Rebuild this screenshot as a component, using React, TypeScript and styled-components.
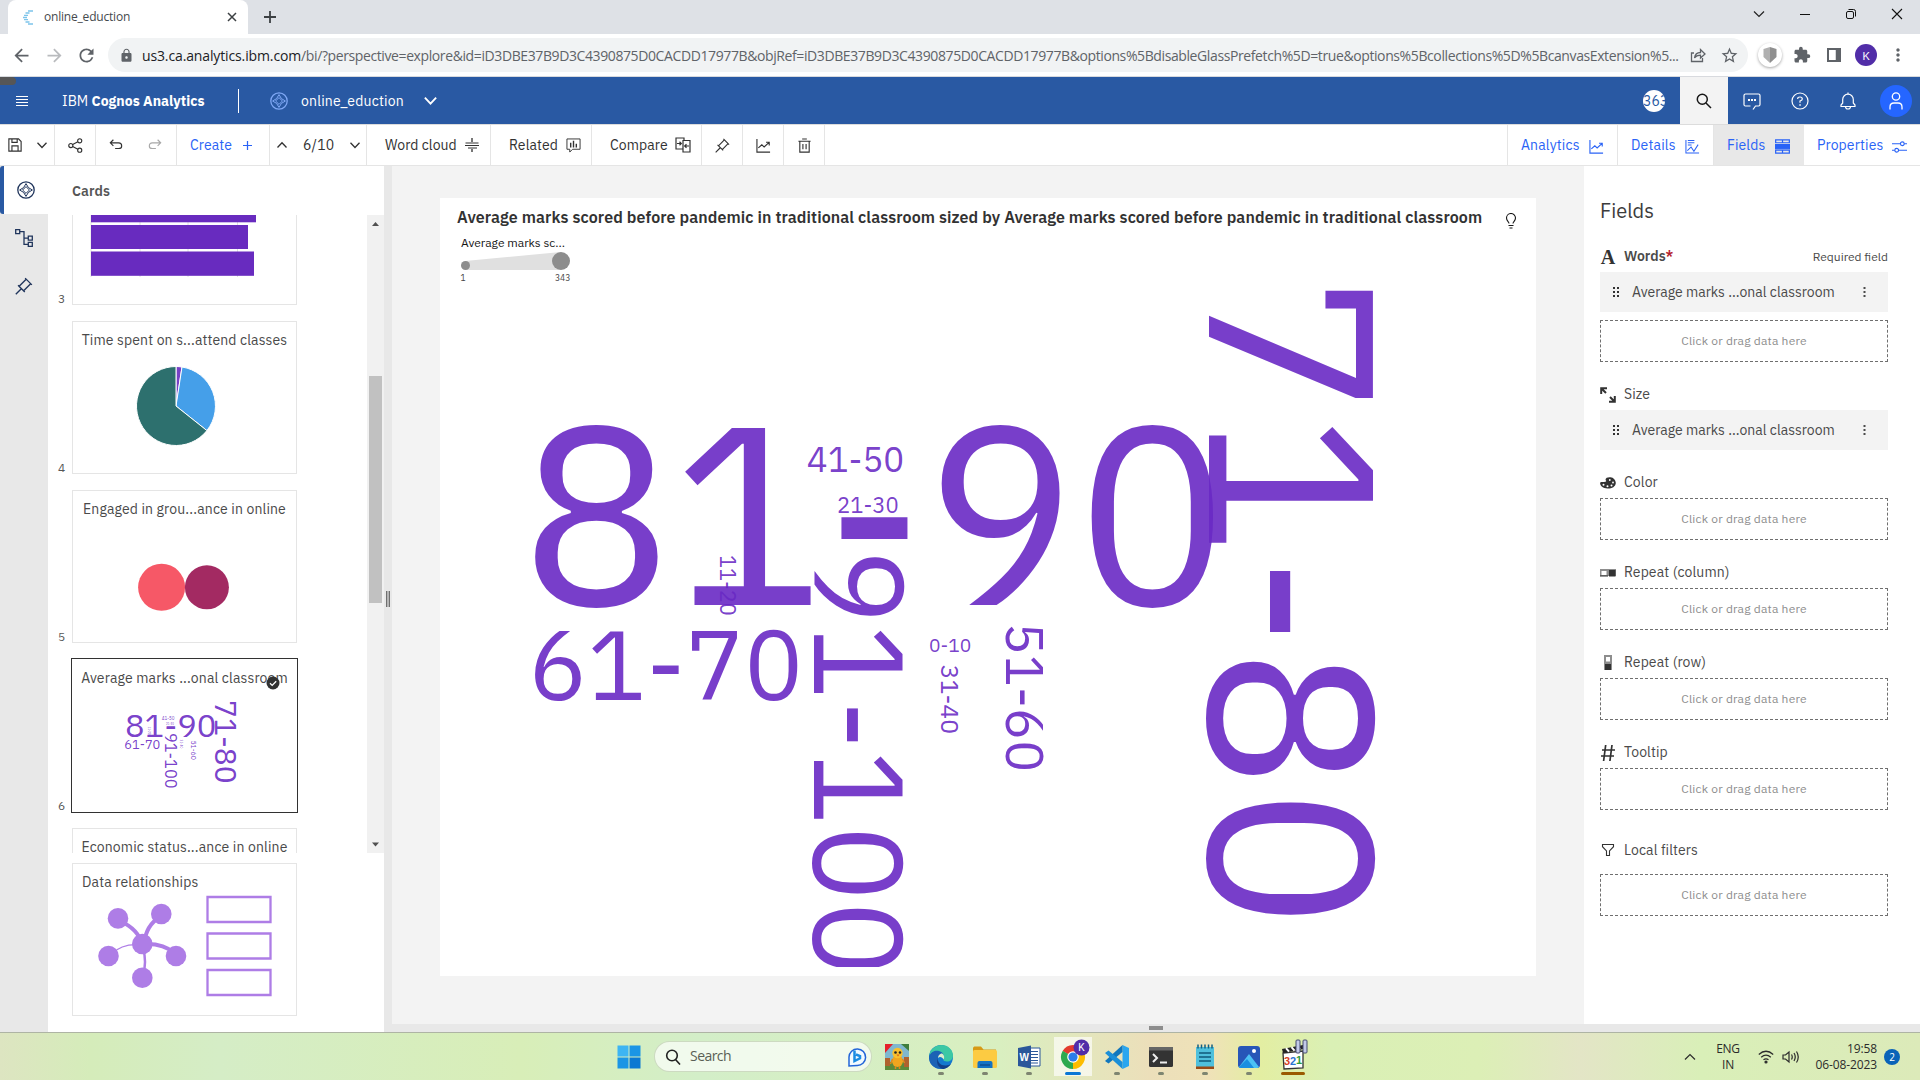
import React from "react";
import styled, { createGlobalStyle, css } from "styled-components";
import { MdArrowBack, MdArrowForward, MdRefresh, MdLock, MdStarBorder, MdExtension, MdMoreVert } from "react-icons/md";

const PLEX = `"IBM Plex Sans", Roboto, "Liberation Sans", sans-serif`;
const SEGOE = `"Segoe UI", "Open Sans", "Noto Sans", sans-serif`;
const PURPLE = "#6929c4";

const Global = createGlobalStyle`
  *, *::before, *::after { box-sizing: border-box; }
  body { margin: 0; overflow: hidden; background: #fff; font-family: ${PLEX}; color: #323232; }
  svg { display: block; flex: none; }
`;

const Screen = styled.div`
  width: 1920px;
  height: 1080px;
  display: flex;
  flex-direction: column;
  overflow: hidden;
`;

const Label = styled.span<{ $size?: number; $ls?: number; $weight?: number; $color?: string }>`
  font-size: ${(p) => p.$size ?? 14}px;
  letter-spacing: ${(p) => p.$ls ?? 0.13}px;
  font-weight: ${(p) => p.$weight ?? 400};
  color: ${(p) => p.$color ?? "inherit"};
  white-space: nowrap;
  line-height: 1.3;
`;

/* ---------- browser chrome ---------- */
const TabStrip = styled.div`
  height: 34px;
  flex: none;
  display: flex;
  align-items: stretch;
  background: #dee1e6;
  padding-left: 8px;
  font-family: ${SEGOE};
`;
const Tab = styled.div`
  width: 240px;
  background: #fff;
  border-radius: 8px 8px 0 0;
  display: flex;
  align-items: center;
  padding: 0 9px 0 15px;
  color: #45494d;
  > :nth-child(2) { margin-left: 10px; flex: 1; }
`;
const NewTab = styled.div`
  width: 44px;
  display: grid;
  place-items: center;
`;
const WindowButtons = styled.div`
  margin-left: auto;
  display: flex;
  height: 28px;
  > svg { width: 46px; height: 28px; }
`;
const AddressRow = styled.div`
  height: 43px;
  flex: none;
  display: flex;
  align-items: center;
  background: #fff;
  border-bottom: 1px solid #d8dade;
  color: #5f6368;
`;
const NavButtons = styled.div`
  display: flex;
  width: 108px;
  padding-left: 11px;
  gap: 11.5px;
`;
const UrlBar = styled.div`
  width: 1640px;
  height: 34px;
  border-radius: 17px;
  background: #f1f3f4;
  display: flex;
  align-items: center;
  padding: 0 9px 0 11px;
  font-family: ${SEGOE};
`;
const Url = styled.div`
  flex: 1;
  margin-left: 8px;
  font-size: 14px;
  letter-spacing: -0.395px;
  white-space: nowrap;
  b { font-weight: 400; color: #202124; letter-spacing: -0.13px; }
`;
const UrlIcons = styled.div`
  display: flex;
  align-items: center;
  gap: 14px;
`;
const ExtensionRow = styled.div`
  flex: 1;
  display: grid;
  grid-template-columns: repeat(5, 32px);
  justify-content: start;
  align-items: center;
  justify-items: center;
  padding-left: 6px;
`;
const Disc = styled.div<{ $d: number; $bg: string }>`
  width: ${(p) => p.$d}px;
  height: ${(p) => p.$d}px;
  flex: none;
  border-radius: 50%;
  background: ${(p) => p.$bg};
  display: flex;
  align-items: center;
  justify-content: center;
  overflow: hidden;
  color: #fff;
  font-size: 12px;
`;
const ShieldDisc = styled(Disc)`
  box-shadow: 0 1px 3px rgba(0, 0, 0, 0.35);
`;

/* ---------- application bar ---------- */
const AppBar = styled.header`
  height: 47px;
  flex: none;
  background: #2959a3;
  color: #fff;
  display: flex;
  align-items: center;
  position: relative;
`;
const Notch = styled.i`
  position: absolute;
  left: 0;
  top: 0;
  width: 16px;
  height: 8px;
  border-radius: 0 4px 4px 0;
  background: #565656;
`;
const Brand = styled.div`
  width: 238px;
  padding-left: 16px;
  display: flex;
  align-items: center;
  gap: 34px;
  > span { padding-top: 1px; }
`;
const DocName = styled.div`
  display: flex;
  align-items: center;
  border-left: 1px solid #fff;
  height: 24px;
  padding-left: 31px;
  gap: 13px;
  > span { padding-top: 1px; }
  > :nth-child(3) { margin-left: 6px; }
`;
const BarActions = styled.div`
  margin-left: auto;
  display: flex;
  height: 100%;
  align-items: center;
`;
const BarCell = styled.div<{ $on?: boolean }>`
  width: 48px;
  height: 100%;
  display: grid;
  place-items: center;
  background: ${(p) => (p.$on ? "#f3f3f3" : "transparent")};
`;
const Credit = styled(Disc)`
  margin-right: 15px;
  justify-content: flex-start;
  color: #2959a3;
  font-size: 14px;
`;

/* ---------- toolbar ---------- */
const Toolbar = styled.nav`
  height: 42px;
  flex: none;
  display: flex;
  background: #fff;
  border-top: 1px solid #dcdcdc;
  border-bottom: 1px solid #e5e5e5;
`;
const Tool = styled.div<{ $w: number; $pl?: number; $gap?: number; $center?: boolean; $color?: string }>`
  width: ${(p) => p.$w}px;
  display: flex;
  align-items: center;
  padding-left: ${(p) => p.$pl ?? 0}px;
  gap: ${(p) => p.$gap ?? 0}px;
  color: ${(p) => p.$color ?? "inherit"};
  border-right: 1px solid #e5e5e5;
  ${(p) => p.$center && css`justify-content: center;`}
`;
const PaneTabs = styled.div`
  margin-left: auto;
  display: flex;
  color: #2a63f6;
  border-left: 1px solid #e5e5e5;
`;
const PaneTab = styled.div<{ $w: number; $on?: boolean }>`
  width: ${(p) => p.$w}px;
  display: flex;
  align-items: center;
  justify-content: space-between;
  padding: 0 13px;
  background: ${(p) => (p.$on ? "#e8e8e8" : "#fff")};
  border-right: 1px solid ${(p) => (p.$on ? "#e8e8e8" : "#e5e5e5")};
  &:last-child { border-right: none; }
  > svg { margin-top: 3px; }
`;

/* ---------- work area ---------- */
const Work = styled.main`
  height: 866px;
  flex: none;
  display: flex;
`;
const Rail = styled.aside`
  width: 48px;
  background: #e8e8e8;
  color: #20355c;
`;
const RailCell = styled.div<{ $on?: boolean }>`
  height: 48px;
  display: grid;
  place-items: center;
  background: ${(p) => (p.$on ? "#fff" : "transparent")};
  border-left: ${(p) => (p.$on ? "4px solid #2959a3" : "none")};
  border-radius: ${(p) => (p.$on ? "3px 0 0 3px" : "0")};
`;
const CardsPanel = styled.section`
  width: 336px;
  background: #fff;
  display: flex;
  flex-direction: column;
`;
const CardsHead = styled.div`
  height: 49px;
  padding: 14px 0 0 24px;
  color: #565656;
`;
const ScrollArea = styled.div`
  height: 638px;
  overflow: hidden;
  display: flex;
  justify-content: space-between;
`;
const CardList = styled.div`
  margin-top: -63px;
  display: flex;
  flex-direction: column;
  gap: 16px;
`;
const CardRow = styled.div`
  height: 153px;
  flex: none;
  display: grid;
  grid-template-columns: 24px 225px;
  align-items: stretch;
`;
const CardNo = styled.div`
  align-self: end;
  padding-left: 10px;
  font-size: 12px;
  color: #565656;
  line-height: 12px;
`;
const Card = styled.div<{ $on?: boolean }>`
  height: 153px;
  background: #fff;
  outline: ${(p) => (p.$on ? "1px solid #323232" : "none")};
  border: 1px solid ${(p) => (p.$on ? "#fff" : "#e5e5e5")};
  position: relative;
  display: flex;
  flex-direction: column;
  align-items: center;
  padding-top: 8.5px;
  color: #4a4a4a;
`;
const CardArt = styled.svg`
  position: absolute;
  left: -1px;
  top: -1px;
`;
const Track = styled.div`
  width: 17px;
  background: #f1f1f1;
  display: flex;
  flex-direction: column;
  align-items: center;
  > svg:last-child { margin-top: auto; }
`;
const Thumb = styled.div`
  width: 13px;
  height: 227px;
  margin-top: 144px;
  background: #c1c1c1;
`;
const Pinned = styled.div`
  padding: 10px 0 0 24px;
  ${Card} { width: 225px; align-items: flex-start; padding-left: 9px; }
`;
const Splitter = styled.div`
  width: 8px;
  background: #e8e8e8;
  padding: 425px 2px 0;
`;
const SplitGrip = styled.div`
  width: 4px;
  height: 16px;
  border: 1px solid #6f6f6f;
  border-width: 0 1.5px;
  background: #b5b5b5;
`;
const Right = styled.div`
  flex: 1;
  display: flex;
  flex-direction: column;
`;
const Stage = styled.div`
  flex: 1;
  display: flex;
  justify-content: space-between;
  background: #f3f3f3;
`;
const Canvas = styled.section`
  margin: 32px 0 0 48px;
  width: 1096px;
  height: 778px;
  background: #fff;
`;
const CanvasHead = styled.div`
  display: flex;
  justify-content: space-between;
  align-items: flex-start;
  padding: 9px 17px 0 17px;
  height: 34px;
  color: #323232;
  > svg { margin-top: 6px; }
`;
const BottomSplit = styled.div`
  height: 8px;
  background: #e8e8e8;
  display: flex;
  padding: 2px 0 0 757px;
  i { width: 14px; height: 4px; background: #8d8d8d; }
`;

/* ---------- fields panel ---------- */
const Fields = styled.aside`
  width: 336px;
  background: #fff;
  padding: 0 32px 0 16px;
`;
const FieldsTitle = styled.h2`
  margin: 0;
  height: 77px;
  padding-top: 31px;
  font-size: 20px;
  line-height: 28px;
  font-weight: 400;
  letter-spacing: 0;
  color: #3c3c3c;
`;
const SlotHead = styled.div<{ $h: number; $lift: number }>`
  height: ${(p) => p.$h}px;
  padding-bottom: ${(p) => p.$lift}px;
  display: flex;
  align-items: center;
  gap: 8px;
  color: #4a4a4a;
  > :nth-child(3) { margin-left: auto; }
  em { font-style: normal; color: #b3202c; }
`;
const Slot = styled.div<{ $after: number }>`
  margin-bottom: ${(p) => p.$after}px;
  display: flex;
  flex-direction: column;
  gap: 8px;
`;
const Chip = styled.div`
  height: 40px;
  background: #f3f3f3;
  display: flex;
  align-items: center;
  padding: 0 22px 0 13px;
  gap: 12px;
  color: #4a4a4a;
  > :last-child { margin-left: auto; }
`;
const Drop = styled.div`
  height: 42px;
  border: 1px dashed #6f6f6f;
  display: grid;
  place-items: center;
  color: #8d8d8d;
`;

/* ---------- taskbar ---------- */
const Taskbar = styled.footer`
  height: 48px;
  flex: none;
  border-top: 1px solid #aeb4a4;
  background: linear-gradient(90deg, #dde5c1 0, #d5ecba 90px, #d5edc6 220px, #d8eeb8 520px, #d3eec8 700px, #d9efc0 1000px, #ecdfba 1150px, #efe2b8 1210px, #e3eea2 1260px, #daf0b5 1330px, #dcefb6 1480px, #e3e5c6 1580px, #d9efb8 1700px, #dceab9 1920px);
  display: flex;
  align-items: center;
  font-family: ${SEGOE};
  color: #2b2b2b;
`;
const Apps = styled.div`
  margin-left: 610px;
  display: flex;
  align-items: center;
  height: 100%;
`;
const TaskApp = styled.div<{ $mark?: "dot" | "blue" | "orange"; $on?: boolean; $w?: number }>`
  width: ${(p) => p.$w ?? 44}px;
  height: 47px;
  display: flex;
  flex-direction: column;
  align-items: center;
  padding-top: 11px;
  > svg { width: 26px; height: 26px; }
  ${(p) =>
    p.$on &&
    css`
      background: linear-gradient(rgba(255, 255, 255, 0.65), rgba(255, 255, 255, 0.65)) center 4px / 38px 39px no-repeat;
    `}
  &::after {
    content: "";
    margin-top: 2px;
    height: 3px;
    border-radius: 2px;
    width: ${(p) => (p.$mark === "blue" ? 16 : p.$mark === "orange" ? 24 : p.$mark ? 6 : 0)}px;
    background: ${(p) => (p.$mark === "blue" ? "#0a77d5" : p.$mark === "orange" ? "#9a5a00" : "#7e8571")};
  }
`;
const SearchPill = styled.div`
  width: 218px;
  height: 31px;
  margin: 0 3px 0 7px;
  border-radius: 16px;
  background: rgba(255, 255, 255, 0.68);
  border: 1px solid rgba(160, 180, 140, 0.45);
  display: flex;
  align-items: center;
  padding: 0 3px 0 10px;
  gap: 9px;
  color: #5a5f55;
  > :last-child { margin-left: auto; }
`;
const Tray = styled.div`
  margin-left: auto;
  width: 240px;
  display: flex;
  align-items: center;
  font-size: 12px;
  line-height: 16px;
  white-space: nowrap;
`;
const Lang = styled.div`
  width: 30px;
  text-align: center;
  margin: 0 15px 0 13px;
  letter-spacing: -0.3px;
`;
const Clock = styled.div`
  margin-left: auto;
  text-align: right;
  letter-spacing: -0.1px;
  margin-right: 7px;
`;
const Badge = styled(Disc)`
  margin-right: 20px;
  font-size: 10px;
`;

/* ---------- icons ---------- */
const I: React.FC<{ s?: number; vb?: string; sw?: number; color?: string; children: React.ReactNode }> = ({ s = 16, vb = "0 0 16 16", sw = 1, color = "currentColor", children }) => (
  <svg width={s} height={s} viewBox={vb} fill="none" stroke={color} strokeWidth={sw}>{children}</svg>
);
const Chevron: React.FC<{ up?: boolean; s?: number; sw?: number }> = ({ up, s = 12, sw = 1.3 }) => (
  <I s={s} vb="0 0 12 12" sw={sw}><path d={up ? "M1.5 8.5L6 3.7l4.5 4.8" : "M1.5 3.7L6 8.5l4.5-4.8"} /></I>
);
const Explore: React.FC<{ s?: number; color?: string }> = ({ s = 18, color }) => (
  <I s={s} vb="0 0 18 18" sw={1.3} color={color}>
    <circle cx="9" cy="9" r="8.2" />
    <path d="M9 2.6Q10.6 7.4 15.4 9Q10.6 10.6 9 15.4Q7.4 10.6 2.6 9Q7.4 7.4 9 2.6zM9 5.6L12.4 9 9 12.4 5.6 9z" strokeWidth="1" />
  </I>
);
const Pin: React.FC<{ s?: number }> = ({ s = 16 }) => (
  <I s={s} sw={1.2}><path d="M.7 15.3L5.6 10.4M2.7 7.3l6 6M3.7 8.3L9.7 2.3M7.7 12.3l6-6M9 1l6 6" /></I>
);
const Trend: React.FC<{ s?: number }> = ({ s = 16 }) => (
  <I s={s} sw={1.2}><path d="M1 1v14h14M2.5 10.5l3.7-3.2 2.5 2.2L14 4.6M10.7 4.5h3.4v3.4" /></I>
);
const Kebab = () => (
  <svg width="3" height="12" viewBox="0 0 3 12" fill="#4a4a4a"><path d="M.5 1h2v2h-2zM.5 5h2v2h-2zM.5 9h2v2h-2z" /></svg>
);
const Grip = () => (
  <svg width="7" height="12" viewBox="0 0 7 12" fill="#323232"><path d="M0 1h2v2H0zM4 1h2v2H4zM0 5h2v2H0zM4 5h2v2H4zM0 9h2v2H0zM4 9h2v2H4z" /></svg>
);

/* ---------- word cloud ---------- */
type WordT = { text: string; x: number; y: number; cap: number; down?: boolean };

const Word: React.FC<WordT> = ({ text, x, y, cap, down }) => (
  <text transform={`translate(${x} ${y})${down ? " rotate(90)" : ""}`} fontSize={cap / 0.698} fill={PURPLE} fillOpacity={0.9} fontFamily={PLEX}>{text}</text>
);

const words: WordT[] = [
  { text: "81-90", x: 520.5, y: 604.8, cap: 176.5 },
  { text: "71-80", x: 1208.8, y: 274.7, cap: 163.1, down: true },
  { text: "91-100", x: 813.6, y: 548.7, cap: 87.9, down: true },
  { text: "61-70", x: 528.4, y: 700.3, cap: 68.5 },
  { text: "51-60", x: 1006.4, y: 622.7, cap: 37.3, down: true },
  { text: "41-50", x: 806.8, y: 472.2, cap: 24.3 },
  { text: "31-40", x: 941, y: 664.5, cap: 17.4, down: true },
  { text: "21-30", x: 837, y: 512.9, cap: 15.4 },
  { text: "11-20", x: 719.8, y: 555, cap: 15.2, down: true },
  { text: "0-10", x: 929, y: 651.7, cap: 13.4 },
];
const thumbWords: WordT[] = [
  { text: "81-90", x: 125, y: 736.7, cap: 22.8 },
  { text: "71-80", x: 215, y: 700, cap: 20.9, down: true },
  { text: "91-100", x: 165, y: 733, cap: 11.4, down: true },
  { text: "61-70", x: 124.3, y: 748.7, cap: 9 },
  { text: "51-60", x: 190.6, y: 740.4, cap: 4.9, down: true },
  { text: "41-50", x: 161.8, y: 720, cap: 3.2 },
  { text: "31-40", x: 179.5, y: 739.5, cap: 2.2, down: true },
  { text: "21-30", x: 166, y: 725, cap: 2 },
  { text: "11-20", x: 148, y: 726.5, cap: 2, down: true },
];

/* ---------- thumbnails ---------- */
const BarsArt = () => (
  <CardArt width="225" height="153" viewBox="72 152 225 153">
    <path d="M140 200v77M188 200v77M237.500 200v77M91 200v77" stroke="#e0e0e0" />
    <g fill="#682bbf"><rect x="91" y="198" width="165" height="24.300" /><rect x="91" y="225" width="157" height="24" /><rect x="91" y="251.500" width="163" height="24.300" /></g>
  </CardArt>
);
const PieArt = () => (
  <CardArt width="225" height="153" viewBox="72 321 225 153">
    <g stroke="#fff" strokeWidth="1">
      <path d="M176 406V366.500A39.500 39.500 0 0 1 182 367z" fill="#7741c6" />
      <path d="M176 406L182 367A39.500 39.500 0 0 1 206.900 430.600z" fill="#459fe9" />
      <path d="M176 406L206.900 430.600A39.500 39.500 0 1 1 176 366.500z" fill="#2d706e" />
    </g>
  </CardArt>
);
const BubbleArt = () => (
  <CardArt width="225" height="153" viewBox="72 490 225 153">
    <circle cx="161.600" cy="587.300" r="23.500" fill="#f65867" /><circle cx="206.900" cy="587.300" r="22" fill="#a32a62" />
  </CardArt>
);
const CloudArt = () => (
  <CardArt width="225" height="153" viewBox="72 659 225 153">
    {thumbWords.map((w) => <Word key={w.text} {...w} />)}
    <circle cx="273" cy="683" r="6.500" fill="#323232" />
    <path d="M270 683.200l2.200 2.200 4-4.200" fill="none" stroke="#fff" strokeWidth="1.300" />
  </CardArt>
);
const RelationsArt = () => (
  <CardArt width="225" height="153" viewBox="72 863 225 153">
    <g fill="none" stroke="#ae7de6">
      <path d="M142 944Q138 929 120 921" strokeWidth="4" /><path d="M144 944Q146 925 160 917" strokeWidth="4" />
      <path d="M143 944Q164 943 174 953" strokeWidth="4" /><path d="M142 945Q122 943 112 954" strokeWidth="1.200" />
      <path d="M143 948Q147 962 143 975" strokeWidth="2.500" />
      <path d="M207.500 897h63v25h-63zM207.500 933.500h63v25h-63zM207.500 970h63v25h-63z" strokeWidth="2.300" />
    </g>
    <g fill="#ae7de6">
      {[[142.300, 944], [118, 918.400], [161.300, 914], [108.500, 956], [176, 956], [142.300, 977.700]].map(([x, y]) => <circle key={`${x}-${y}`} cx={x} cy={y} r="10.300" />)}
    </g>
  </CardArt>
);

const cards = [
  { no: 3, title: "", art: <BarsArt /> },
  { no: 4, title: "Time spent on s...attend classes", art: <PieArt /> },
  { no: 5, title: "Engaged in grou...ance in online", art: <BubbleArt /> },
  { no: 6, title: "Average marks ...onal classroom", art: <CloudArt />, on: true },
  { no: 7, title: "Economic status...ance in online", art: null },
];

const slots = [
  { icon: "words", name: "Words", req: true, chip: true, drop: true, h: 29, after: 17 },
  { icon: "size", name: "Size", chip: true, h: 31, after: 17 },
  { icon: "color", name: "Color", drop: true, h: 31, after: 17 },
  { icon: "col", name: "Repeat (column)", drop: true, h: 31, after: 17 },
  { icon: "row", name: "Repeat (row)", drop: true, h: 31, after: 17 },
  { icon: "tip", name: "Tooltip", drop: true, h: 31, after: 16 },
  { icon: "filter", name: "Local filters", drop: true, h: 48, after: 0 },
];
const slotIcons: Record<string, React.ReactNode> = {
  words: <svg width="16" height="16" viewBox="0 0 16 16"><text x="8" y="15" textAnchor="middle" fontFamily={`"Liberation Serif", serif`} fontWeight="700" fontSize="20" fill="#323232">A</text></svg>,
  size: <I sw={2} color="#323232"><path d="M1.200 7V1.200H7M1.500 1.500l4.500 4.500M14.800 9v5.800H9M14.500 14.500L10 10" /></I>,
  color: (
    <svg width="16" height="16" viewBox="0 0 16 16"><path d="M5.500 5C5.500 2.500 8 2 10.500 2.200 13.500 2.500 15.800 5 15.800 8 15.500 11.800 12 13.600 7.500 13.500 3 13.300 0 11 .1 8 .2 6.600 2 6.900 4 7 6 7 7 6 5.500 5z" fill="#323232" /><g fill="#fff"><circle cx="9.800" cy="5" r=".9" /><circle cx="13" cy="7.500" r=".9" /><circle cx="11.500" cy="10.500" r="1" /><circle cx="7.500" cy="11.300" r="1" /><circle cx="3.500" cy="9.800" r="1" /></g></svg>
  ),
  col: <svg width="16" height="16" viewBox="0 0 16 16"><path d="M0 4h16v7H0z" fill="#8d8d8d" /><path d="M0 10.500h8v1H0zM9 5h6.500v6.500H9z" fill="#323232" /><path d="M1.500 6h5v4h-5z" fill="#fff" /></svg>,
  row: <svg width="16" height="16" viewBox="0 0 16 16"><path d="M4 0h8v15H4z" fill="#8d8d8d" /><path d="M5 9h6v6H5z" fill="#323232" /><path d="M6 2h4v4.500H6z" fill="#fff" /></svg>,
  tip: <I sw={1.7} color="#323232"><path d="M5.700 0L3.600 16M12 0L9.900 16M2 5h13M1 11h13" /></I>,
  filter: <I sw={1.100} color="#323232"><path d="M2.500 2.500h11v2.200l-4 4.300v4.500h-3V9l-4-4.300z" /></I>,
};

/* ---------- taskbar icons ---------- */
const StartIcon = () => (
  <svg viewBox="0 0 26 26"><path d="M1.500 1.500h11v11h-11z" fill="#3db5f3" /><path d="M13.500 1.500h11v11h-11zM1.500 13.500h11v11h-11z" fill="#1b95e5" /><path d="M13.500 13.500h11v11h-11z" fill="#0b78d2" /></svg>
);
const BingIcon = () => (
  <svg width="22" height="22" viewBox="0 0 22 22"><path d="M3 20V11a8.300 8.300 0 1 1 8 8.500z" fill="#f2faff" stroke="#2365d8" strokeWidth="1.500" /><path d="M8.500 4.500v10.500l5.500-2.700v-2.300l-4-1.500" fill="none" stroke="#1a8be2" strokeWidth="2.500" /></svg>
);
const ChickIcon = () => (
  <svg viewBox="0 0 26 26"><path d="M1 0h24v26H1z" fill="#7fb7cf" /><path d="M1 18h24v8H1z" fill="#5d8a3a" /><path d="M1 14h5v8H1zM20 13h5v10h-5z" fill="#b0622f" /><path d="M17 0h8v7z" fill="#3f7e3c" /><ellipse cx="13.500" cy="17" rx="5.500" ry="6" fill="#f0a51f" /><path d="M8.500 15l-2 5M18.500 15l2 4M11.500 22v3M15.500 22v3" stroke="#e08a1a" strokeWidth="1.500" /><circle cx="13.500" cy="9" r="5.200" fill="#f8c02e" /><circle cx="11.500" cy="8.500" r="1.300" fill="#222" /><circle cx="16" cy="8.500" r="1.300" fill="#222" /><path d="M12.500 10.500h3l-1.500 2z" fill="#d8641a" /><path d="M1 0h8L1 9z" fill="#e6202a" /></svg>
);
const EdgeIcon = () => (
  <svg viewBox="0 0 26 26"><circle cx="13" cy="13" r="12" fill="#1479cf" /><path d="M1.200 12C2 5 7.500 1 13.500 1 20 1 25 6 25 11.500c0 4-3 6-6 6-2.500 0-4-1-3.500-2 1.500-3.500-1-6.500-5-6.500-4.500 0-8 1-9.300 3z" fill="#3cc8a4" /><path d="M1.200 12C3 7 8 6 11 7c5 1.500 6 6 4.500 8.500-1-2-3-3-5-2-3 2-1.500 8.500 4 11C7 26 0 20 1.200 12z" fill="#1b62b5" /><path d="M10 14c-1 4 3 8 8 7.500 2 0 4-1 5.200-2C21.500 22.500 18 25 14.500 25 9 23 8 17 10 14z" fill="#123f8a" /><path d="M15.500 15.500c1.500-2 .5-5-1.500-6-2.500 0-4 2.500-4 4.500 1.500-2 4.500-1 5.500 1.500z" fill="#daeecb" /></svg>
);
const FolderIcon = () => (
  <svg viewBox="0 0 26 26"><path d="M1 4.500C1 3 2 2.500 3 2.500h6l2.500 3H24v6H1z" fill="#d79a16" /><rect x="1" y="6" width="24" height="18" rx="1.500" fill="#fccb42" /><path d="M5.500 24v-5q0-2 2-2h11q2 0 2 2v5z" fill="#1473c4" /><path d="M8 21h10" stroke="#0d4e93" strokeWidth="1.500" /></svg>
);
const WordIcon = () => (
  <svg viewBox="0 0 26 26"><path d="M13 4h11v18H13z" fill="#fff" stroke="#2b579a" /><path d="M15 7.500h7M15 10.500h7M15 13.500h7M15 16.500h7M15 19h7" stroke="#2b579a" strokeWidth="1.200" /><path d="M2 4l13-2.500v23L2 22z" fill="#2b579a" /><text x="8.300" y="17" textAnchor="middle" fontSize="10" fontWeight="700" fill="#fff" fontFamily={`"Liberation Sans", sans-serif`}>W</text></svg>
);
const ChromeIcon = () => (
  <svg viewBox="0 0 26 26" overflow="visible"><path d="M13 13L2.600 7A12 12 0 0 1 23.400 7z" fill="#e33b2e" /><path d="M13 13L2.600 7A12 12 0 0 0 13 25z" fill="#2da94f" /><path d="M13 13L23.400 7A12 12 0 0 1 13 25z" fill="#fdbd00" /><path d="M13 13L2.600 7l5.200 9z" fill="#2da94f" /><circle cx="13" cy="13" r="5.800" fill="#fff" /><circle cx="13" cy="13" r="4.600" fill="#2a7de9" /><circle cx="21.500" cy="3.500" r="8" fill="#512da8" /><text x="21.500" y="7.200" textAnchor="middle" fontSize="10" fill="#fff" fontFamily="Roboto, sans-serif">K</text></svg>
);
const CodeIcon = () => (
  <svg viewBox="0 0 26 26"><path d="M18.500 1L25 4v18l-6.500 3z" fill="#2aa6ef" /><path d="M18.500 1v7L4.500 19.500 1 17z" fill="#1177bd" /><path d="M18.500 25v-7L4.500 6.500 1 9z" fill="#1b8fd8" /></svg>
);
const TermIcon = () => (
  <svg viewBox="0 0 26 26"><rect x="1" y="3" width="24" height="20" rx="1.500" fill="#333" /><path d="M1 3h24v3.500H1z" fill="#666" /><path d="M5 10l4 4-4 4M12 18.500h7" fill="none" stroke="#eee" strokeWidth="2" /></svg>
);
const NoteIcon = () => (
  <svg viewBox="0 0 26 26"><path d="M4 3h18v20H4z" fill="#4fc0dc" /><path d="M7 9h12M7 13h12M7 17h12" stroke="#11597a" strokeWidth="1.500" /><path d="M6 .5v4M9.500.5v4M13 .5v4M16.500.5v4M20 .5v4" stroke="#155f80" strokeWidth="1.500" /><path d="M4 22.500h18V25H4z" fill="#9a4a16" /></svg>
);
const PhotosIcon = () => (
  <svg viewBox="0 0 26 26"><rect x="2" y="2" width="22" height="22" rx="3" fill="#2756b8" /><path d="M3 23L13 10l10 13q-1 1-2 1H5q-1.500 0-2-1z" fill="#4cc2f5" /><path d="M3 23l8-8 7 9H5q-1.500 0-2-1z" fill="#1a8ee0" /><circle cx="18" cy="7" r="2" fill="#fff" /></svg>
);
const ClapIcon = () => (
  <svg viewBox="0 0 26 26" overflow="visible"><path d="M3 9l20-2v17L4 25z" fill="#fff" stroke="#333" strokeWidth="1.300" /><path d="M2 5l21-4 .5 4L3 9z" fill="#222" /><path d="M6 4.200l3 3.500M11.500 3.200l3 3.500M17 2.200l3 3" stroke="#fff" strokeWidth="2" /><g fontSize="11" fontWeight="700" fontFamily={`"Liberation Sans", sans-serif`}><text x="4" y="21" fill="#d8401f">3</text><text x="10" y="20.500" fill="#2d74d0">2</text><text x="16" y="20" fill="#2f9c3d">1</text></g><rect x="16" y="-4" width="4" height="13" rx="1" fill="#c3cbe8" stroke="#444b70" /><rect x="23" y="-4" width="4" height="13" rx="1" fill="#c3cbe8" stroke="#444b70" /></svg>
);

export default function App() {
  return (
    <Screen>
      <Global />
      <TabStrip>
        <Tab>
          <svg width="11" height="15" viewBox="0 0 11 15"><path d="M5 1h5M2.500 3h4M1 5.300h4M0 7.500h4M1 9.700h4M2.500 12h4M5 14h5" stroke="#7cc4ea" strokeWidth="1.300" /></svg>
          <Label $size={12} $ls={-0.2}>online_eduction</Label>
          <I s={14} vb="0 0 14 14" sw={1.500} color="#3c4043"><path d="M3 3l8 8M11 3l-8 8" /></I>
        </Tab>
        <NewTab><I s={14} vb="0 0 14 14" sw={1.800} color="#3c4043"><path d="M7 1v12M1 7h12" /></I></NewTab>
        <WindowButtons>
          <svg viewBox="0 0 46 28" fill="none" stroke="#222" strokeWidth="1.200"><path d="M18 11.500l5 5 5-5" /></svg>
          <svg viewBox="0 0 46 28" stroke="#111"><path d="M18 14.500h10" /></svg>
          <svg viewBox="0 0 46 28" fill="none" stroke="#111"><rect x="18.500" y="11.500" width="7" height="7" rx="1.500" /><path d="M20.500 9.500h5q2 0 2 2v5" /></svg>
          <svg viewBox="0 0 46 28" stroke="#111" strokeWidth="1.100"><path d="M18 9l10 10M28 9l-10 10" /></svg>
        </WindowButtons>
      </TabStrip>
      <AddressRow>
        <NavButtons>
          <MdArrowBack size={21} /><MdArrowForward size={21} color="#b9bbbe" /><MdRefresh size={21} />
        </NavButtons>
        <UrlBar>
          <MdLock size={15} />
          <Url><b>us3.ca.analytics.ibm.com</b>/bi/?perspective=explore&amp;id=iD3DBE37B9D3C4390875D0CACDD17977B&amp;objRef=iD3DBE37B9D3C4390875D0CACDD17977B&amp;options%5BdisableGlassPrefetch%5D=true&amp;options%5Bcollections%5D%5BcanvasExtension%5...</Url>
          <UrlIcons>
            <I s={16} sw={1.300}><path d="M4 6H1.500v8.500h11V11M4.500 11c.5-4 3-5.500 6-5.500V2.500L15 7l-4.500 4V8.200c-2.500 0-4.500.6-6 2.800z" /></I>
            <MdStarBorder size={19} />
          </UrlIcons>
        </UrlBar>
        <ExtensionRow>
          <ShieldDisc $d={24} $bg="#fff"><svg width="14" height="16" viewBox="0 0 14 16"><path d="M7 0l6.500 2v8L7 16z" fill="#8f8f8f" /><path d="M7 0L.5 2v8L7 16z" fill="#b0b0b0" /></svg></ShieldDisc>
          <MdExtension size={18} />
          <I s={14} vb="0 0 14 14" sw={2}><path d="M1 1h12v12H1z" /><path d="M11 1v12" strokeWidth="4.500" /></I>
          <Disc $d={22} $bg="#512da8">K</Disc>
          <MdMoreVert size={20} />
        </ExtensionRow>
      </AddressRow>

      <AppBar>
        <Notch />
        <Brand>
          <I s={12} vb="0 0 12 12" sw={1}><path d="M0 1.500h12M0 4.500h12M0 7.500h12M0 10.500h12" /></I>
          <Label $size={14} $ls={0.03}>IBM <b>Cognos Analytics</b></Label>
        </Brand>
        <DocName>
          <Explore color="#7fa8f5" />
          <Label $ls={0.18}>online_eduction</Label>
          <Chevron s={15} sw={1.500} />
        </DocName>
        <BarActions>
          <Credit $d={22} $bg="#fff">363</Credit>
          <BarCell $on><I s={16} sw={1.500} color="#161616"><circle cx="6.300" cy="6.300" r="5" /><path d="M10 10l5 5" /></I></BarCell>
          <BarCell><I s={18} vb="0 0 18 18" sw={1.200}><path d="M7.500 14H2.500Q1 14 1 12.500v-9Q1 2 2.500 2h13Q17 2 17 3.500v9Q17 14 15.500 14h-3L10 17.500" /><path d="M5 8h2M8 8h2M11 8h2" strokeWidth="2" /></I></BarCell>
          <BarCell><I s={18} vb="0 0 18 18" sw={1.200}><circle cx="9" cy="9" r="8" /><path d="M6.700 7V6.600Q6.700 5 9 5t2.300 2Q11.300 8.300 9 9v1.800" /><path d="M8.300 13h1.500" strokeWidth="1.600" /></I></BarCell>
          <BarCell><I s={18} vb="0 0 18 18" sw={1.200}><path d="M9 .5v2M2 14.500h14v-1.500l-1.700-2V7.500a5.300 5.300 0 0 0-10.600 0V11L2 13zM6.500 14.500a2.500 2.500 0 0 0 5 0" /></I></BarCell>
          <BarCell><Disc $d={32} $bg="#2566ff"><I s={18} vb="0 0 18 18" sw={1.300}><circle cx="9" cy="4.500" r="3.700" /><path d="M3 17.500V15q0-4 4-4h4q4 0 4 4v2.500" /></I></Disc></BarCell>
        </BarActions>
      </AppBar>

      <Toolbar>
        <Tool $w={55} $pl={8} $gap={14}>
          <I s={14} sw={1.300}><path d="M1 1h11l3 3v11H1zM4.500 1v4h6V1M4.500 15V9h7v6" /></I>
          <Chevron />
        </Tool>
        <Tool $w={41} $center><I s={15} sw={1.200}><circle cx="12.500" cy="3" r="2.200" /><circle cx="12.500" cy="13" r="2.200" /><circle cx="3" cy="8" r="2.200" /><path d="M5 7l5.500-3M5 9l5.500 3" /></I></Tool>
        <Tool $w={81} $pl={13} $gap={25}>
          <I s={14} sw={1.300}><path d="M5 2L1.500 5.500 5 9M1.500 5.500H11Q14.500 5.500 14.500 9v0Q14.500 12 11 12H7" /></I>
          <I s={14} sw={1.300} color="#a8a8a8"><path d="M11 2l3.500 3.500L11 9M14.500 5.500H5Q1.500 5.500 1.500 9v0Q1.500 12 5 12H9" /></I>
        </Tool>
        <Tool $w={93} $pl={13} $gap={11} $color="#2a63f6">
          <Label $ls={0.1}>Create</Label>
          <I s={9} vb="0 0 8 8" sw={1.100}><path d="M4 0v8M0 4h8" /></I>
        </Tool>
        <Tool $w={97} $pl={6} $gap={15}><Chevron up /><Label $ls={0.2}>6/10</Label><Chevron /></Tool>
        <Tool $w={124} $pl={18} $gap={7}>
          <Label $ls={0.04}>Word cloud</Label>
          <I s={16}><path d="M1.500 6h13M1 8.500h14M4 11h9" /><path d="M8 1v4M8 12v3" strokeWidth="2" stroke="#777" /></I>
        </Tool>
        <Tool $w={101} $pl={18} $gap={8}>
          <Label $ls={0.1}>Related</Label>
          <I s={15}><path d="M1 1h14v11H7l-3 3v-3H1z" /><path d="M5 5v5M8 3v7M11 6v4" strokeWidth="1.500" /></I>
        </Tool>
        <Tool $w={110} $pl={18} $gap={7}>
          <Label $ls={0.08}>Compare</Label>
          <I s={16} sw={1.200}><path d="M9 3V1H1v11h7M8 3.500h7V15H8z" /><path d="M2 6.500h4M4.500 4.800L6.300 6.500 4.500 8.200M14 9h-4M11.500 7.300L9.700 9l1.800 1.700" /></I>
        </Tool>
        <Tool $w={41} $center><Pin s={15} /></Tool>
        <Tool $w={41} $center><Trend s={15} /></Tool>
        <Tool $w={41} $center><I s={15} sw={1.200}><path d="M5.500 1h5M1.500 3.500h13M3 3.500V15h10V3.500M6.300 6.500v5.500M9.700 6.500v5.500" /></I></Tool>
        <PaneTabs>
          <PaneTab $w={110}><Label $ls={0.15}>Analytics</Label><Trend s={15} /></PaneTab>
          <PaneTab $w={96}><Label $ls={0.18}>Details</Label><I s={15} sw={1.100}><path d="M1 1v14h14M3 1.500h7M3 4h7M3 6.500h4M2.500 12.500l4-4 3 4.500L14 6" /></I></PaneTab>
          <PaneTab $w={90} $on><Label $ls={0.1}>Fields</Label><I s={15} sw={1.300}><path d="M.7 1h14.600v3H.7zM.7 12h14.600v3H.7zM8 1v3M8 12v3" /><path d="M.5 6h15v4.500H.5z" fill="#2a63f6" /></I></PaneTab>
          <PaneTab $w={116}><Label $ls={0.12}>Properties</Label><I s={15} sw={1.200}><circle cx="11" cy="5" r="2" /><circle cx="5" cy="12" r="2" /><path d="M0 5h9M13 5h3M0 12h3M7 12h9" /></I></PaneTab>
        </PaneTabs>
      </Toolbar>

      <Work>
        <Rail>
          <RailCell $on><Explore /></RailCell>
          <RailCell><I s={18} vb="0 0 18 18" sw={1.300}><path d="M.7.7h4v4h-4zM13.300 7.200h4v4h-4zM13.300 13.300h4v4h-4zM4.700 2.700H9v12.600h4.300M9 9.200h4.300" /></I></RailCell>
          <RailCell><Pin s={18} /></RailCell>
        </Rail>
        <CardsPanel>
          <CardsHead><Label $weight={600} $ls={0.1}>Cards</Label></CardsHead>
          <ScrollArea>
            <CardList>
              {cards.map((c) => (
                <CardRow key={c.no}>
                  <CardNo>{c.no}</CardNo>
                  <Card $on={c.on}>{c.art}<Label>{c.title}</Label></Card>
                </CardRow>
              ))}
            </CardList>
            <Track>
              <svg width="17" height="17" viewBox="0 0 17 17"><path d="M5 11l3.500-4 3.500 4z" fill="#505050" /></svg>
              <Thumb />
              <svg width="17" height="17" viewBox="0 0 17 17"><path d="M5 6.500l3.500 4 3.500-4z" fill="#505050" /></svg>
            </Track>
          </ScrollArea>
          <Pinned><Card><RelationsArt /><Label>Data relationships</Label></Card></Pinned>
        </CardsPanel>
        <Splitter><SplitGrip /></Splitter>
        <Right>
          <Stage>
            <Canvas>
              <CanvasHead>
                <Label $size={16} $weight={600} $ls={0.107}>Average marks scored before pandemic in traditional classroom sized by Average marks scored before pandemic in traditional classroom</Label>
                <I s={16} sw={1.100} color="#161616"><path d="M6 10.500C6 9 3.500 8 3.500 5a4.500 4.500 0 0 1 9 0c0 3-2.500 4-2.500 5.500M5.500 12.500h5M6.500 15h3" /></I>
              </CanvasHead>
              <svg width="1096" height="735" viewBox="440 232 1096 735">
                <text x="461" y="247" fontSize="12" letterSpacing="0" fill="#161616" fontFamily={PLEX}>Average marks sc...</text>
                <path d="M465 261L561 252v18H465z" fill="#e0e0e0" />
                <circle cx="465.500" cy="265.500" r="4.500" fill="#8d8d8d" /><circle cx="561" cy="261" r="9" fill="#8d8d8d" />
                <g fontSize="8.500" fill="#464646" fontFamily={PLEX}><text x="460.500" y="281">1</text><text x="555" y="281">343</text></g>
                {words.map((w) => <Word key={w.text} {...w} />)}
              </svg>
            </Canvas>
            <Fields>
              <FieldsTitle>Fields</FieldsTitle>
              {slots.map((s) => (
                <React.Fragment key={s.name}>
                  <SlotHead $h={s.h} $lift={s.req ? 2 : 0}>
                    {slotIcons[s.icon]}
                    <Label $weight={s.req ? 600 : 400} $ls={s.req ? 0 : 0.1}>{s.name}{s.req && <em>*</em>}</Label>
                    {s.req && <Label $size={12} $ls={0}>Required field</Label>}
                  </SlotHead>
                  <Slot $after={s.after}>
                    {s.chip && <Chip><Grip /><Label $ls={0}>Average marks ...onal classroom</Label><Kebab /></Chip>}
                    {s.drop && <Drop><Label $size={12} $ls={0.2}>Click or drag data here</Label></Drop>}
                  </Slot>
                </React.Fragment>
              ))}
            </Fields>
          </Stage>
          <BottomSplit><i /></BottomSplit>
        </Right>
      </Work>

      <Taskbar>
        <Apps>
          <TaskApp $w={37}><StartIcon /></TaskApp>
          <SearchPill>
            <I s={16} sw={1.600} color="#222"><circle cx="7" cy="6.500" r="5.300" /><path d="M10.500 10.500l4.500 5" /></I>
            <Label $size={14} $ls={-0.55}>Search</Label>
            <BingIcon />
          </SearchPill>
          <TaskApp><ChickIcon /></TaskApp>
          <TaskApp $mark="dot"><EdgeIcon /></TaskApp>
          <TaskApp $mark="dot"><FolderIcon /></TaskApp>
          <TaskApp $mark="dot"><WordIcon /></TaskApp>
          <TaskApp $mark="blue" $on><ChromeIcon /></TaskApp>
          <TaskApp $mark="dot"><CodeIcon /></TaskApp>
          <TaskApp $mark="dot"><TermIcon /></TaskApp>
          <TaskApp $mark="dot"><NoteIcon /></TaskApp>
          <TaskApp $mark="dot"><PhotosIcon /></TaskApp>
          <TaskApp $mark="orange"><ClapIcon /></TaskApp>
        </Apps>
        <Tray>
          <svg width="20" height="12" viewBox="0 0 20 12" fill="none" stroke="#2b2b2b" strokeWidth="1.200"><path d="M5 8.500L10 3.500l5 5" /></svg>
          <Lang>ENG<br />IN</Lang>
          <svg width="42" height="16" viewBox="0 0 42 16" fill="none" stroke="#2b2b2b" strokeWidth="1.200"><path d="M.8 5.500Q8 -1 15.200 5.500M3.200 8.200Q8 4 12.800 8.200M5.500 10.800Q8 8.800 10.500 10.800" /><circle cx="8" cy="13" r="1" fill="#2b2b2b" /><path d="M25 6h2.500L31 3v10l-3.500-3H25zM33.500 5.500Q35 8 33.500 10.500M36 4Q38.500 8 36 12M38.500 2.500Q42 8 38.500 13.500" /></svg>
          <Clock>19:58<br />06-08-2023</Clock>
          <Badge $d={16} $bg="#0a63b8">2</Badge>
        </Tray>
      </Taskbar>
    </Screen>
  );
}
